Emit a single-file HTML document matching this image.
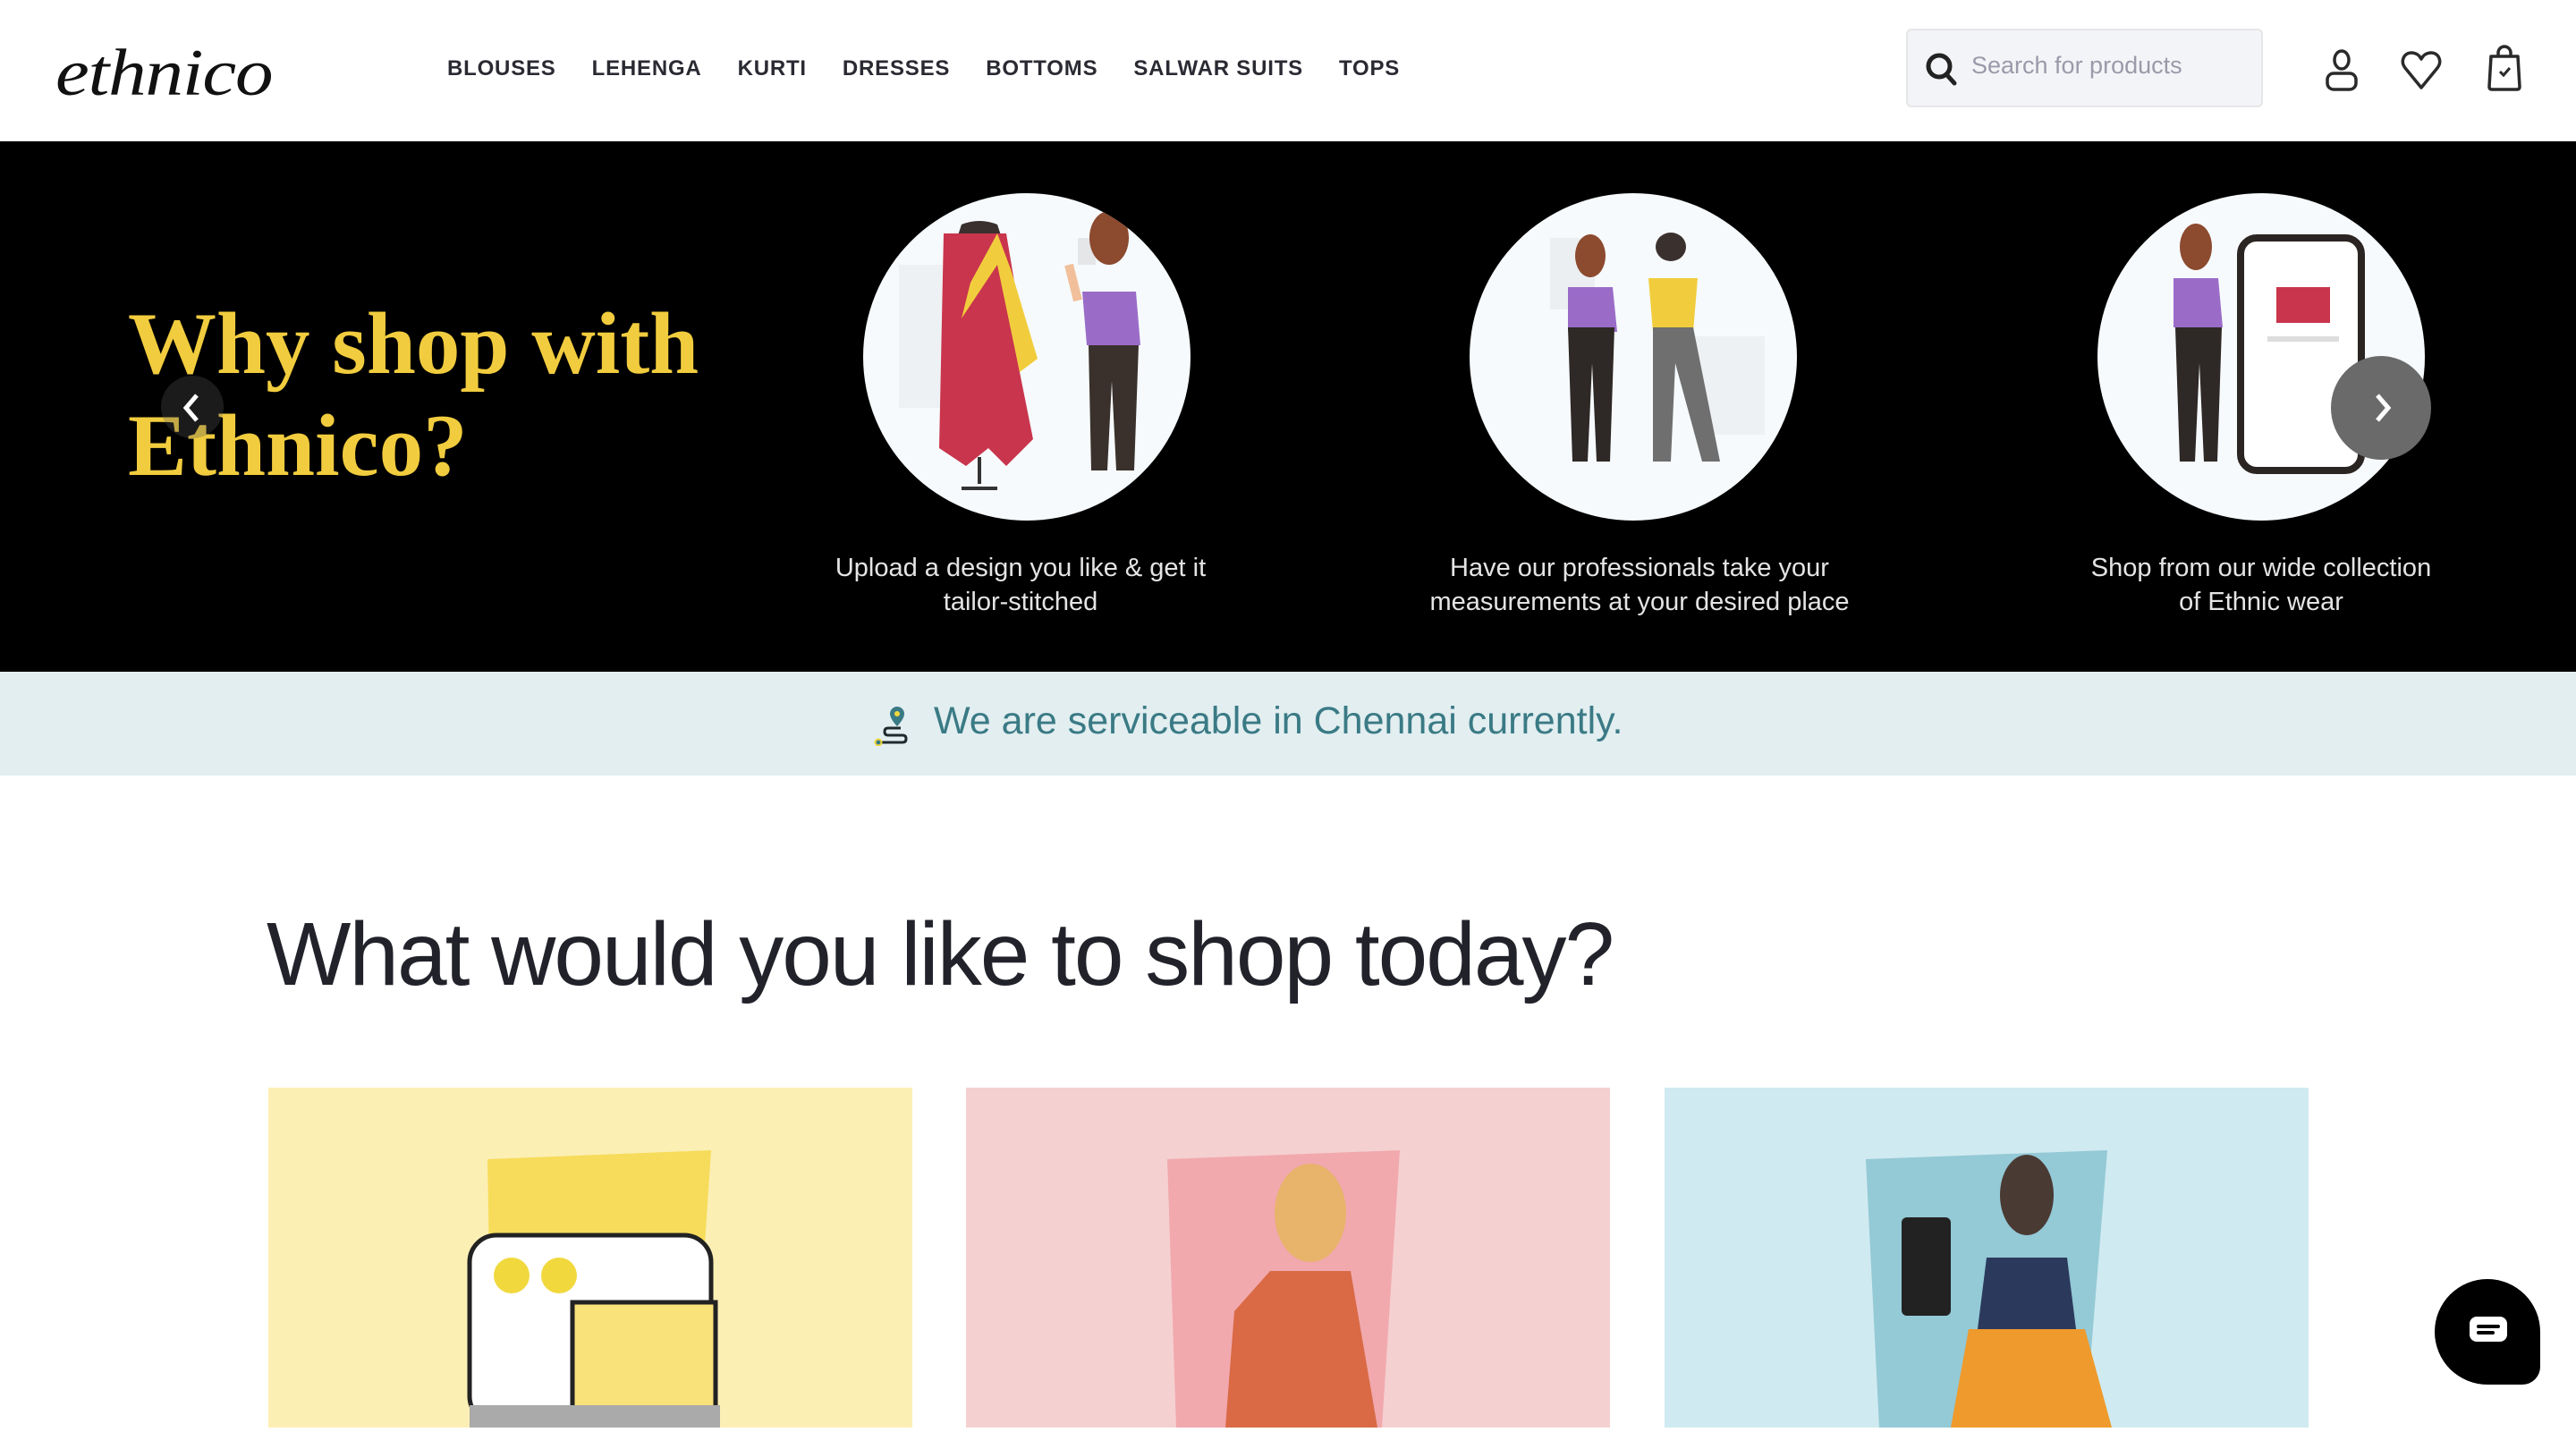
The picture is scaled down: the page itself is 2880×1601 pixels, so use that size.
<!DOCTYPE html>
<html><head><meta charset="utf-8"><style>
*{margin:0;padding:0;box-sizing:border-box}
body{width:2880px;height:1592px;overflow:hidden;background:#fff;font-family:"Liberation Sans",sans-serif;position:relative}
.abs{position:absolute}
.nav{position:absolute;top:63px;left:500px;display:flex;gap:0;font-weight:bold;font-size:24px;letter-spacing:0.8px;color:#2a2a33}
.nav span{margin-right:40px}
.cap{position:absolute;top:616px;width:520px;text-align:center;color:#e4e4e4;font-size:29px;line-height:38px}
.circ{position:absolute;width:366px;height:366px;border-radius:50%;background:#f6fafc;overflow:hidden}
.card{position:absolute;top:1216px;width:720px;height:380px}
</style></head><body>
<!-- header -->
<div class="abs" style="left:62px;top:40px;font-family:'Liberation Serif',serif;font-style:italic;font-size:74px;color:#111;letter-spacing:-1px;transform:scaleX(1.15);transform-origin:left">ethnico</div>
<div class="nav"><span>BLOUSES</span><span>LEHENGA</span><span>KURTI</span><span>DRESSES</span><span>BOTTOMS</span><span>SALWAR SUITS</span><span>TOPS</span></div>
<div class="abs" style="left:2131px;top:32px;width:399px;height:88px;background:#f3f4f7;border:2px solid #e6e6e8;border-radius:6px"></div>
<svg class="abs" style="left:2152px;top:58px" width="38" height="40" viewBox="0 0 38 40"><circle cx="16" cy="16" r="12" fill="none" stroke="#222" stroke-width="5"/><path d="M24 25l9 10" stroke="#222" stroke-width="5" stroke-linecap="round"/></svg>
<div class="abs" style="left:2204px;top:58px;font-size:27px;color:#9a9aaa">Search for products</div>
<svg class="abs" style="left:2596px;top:54px" width="44" height="48" viewBox="0 0 44 48"><ellipse cx="22" cy="13" rx="8" ry="10" fill="none" stroke="#2a2a2a" stroke-width="3.5"/><rect x="6" y="28" width="32" height="18" rx="7" fill="none" stroke="#2a2a2a" stroke-width="3.5"/></svg>
<svg class="abs" style="left:2684px;top:56px" width="46" height="44" viewBox="0 0 46 44"><path d="M23 42L5 20C-1 12 4 3 12 3c5 0 9 3 11 7 2-4 6-7 11-7 8 0 13 9 7 17z" fill="none" stroke="#2a2a2a" stroke-width="3.5" stroke-linejoin="round"/></svg>
<svg class="abs" style="left:2780px;top:50px" width="40" height="52" viewBox="0 0 40 52"><path d="M13 14V9a7 7 0 0114 0v5" fill="none" stroke="#2a2a2a" stroke-width="3.5"/><path d="M5 13h30l2 34q0 3-3 3H6q-3 0-3-3z" fill="none" stroke="#2a2a2a" stroke-width="3.5" stroke-linejoin="round"/><path d="M15 30l4 4 7-8" fill="none" stroke="#2a2a2a" stroke-width="3"/></svg>
<!-- banner -->
<div class="abs" style="left:0;top:158px;width:2880px;height:593px;background:#000"></div>
<div class="abs" style="left:143px;top:328px;font-family:'Liberation Serif',serif;font-weight:bold;font-size:99px;line-height:114px;color:#f1cc3e">Why shop with<br>Ethnico?</div>
<div class="abs" style="left:180px;top:420px;width:70px;height:70px;border-radius:50%;background:rgba(90,90,90,.3)"></div>
<svg class="abs" style="left:200px;top:438px" width="30" height="36"><path d="M20 4L8 18l12 14" fill="none" stroke="#fff" stroke-width="5"/></svg>
<div class="circ" style="left:965px;top:216px">
<svg width="366" height="366" viewBox="0 0 366 366"><rect x="40" y="80" width="110" height="160" fill="#eef1f3"/><rect x="240" y="50" width="20" height="30" fill="#e4e6e8"/>
<path d="M110 35q20-8 40 0l5 15h-50z" fill="#3a302e"/><path d="M90 45h70l10 60-10 20 30 150-30 30-20-20-25 20-30-20z" fill="#c9354d"/><path d="M150 45l15 40 30 100-20 15-25-120-40 60 10-40z" fill="#f1cd3d"/><path d="M130 295v30M110 330h40" stroke="#333" stroke-width="4"/>
<ellipse cx="275" cy="50" rx="22" ry="30" fill="#8c4a2f"/><path d="M245 110h60l5 60h-60z" fill="#9a6cc8"/><path d="M252 170h56l-5 140h-20l-5-100-5 100h-18z" fill="#3a312c"/><path d="M240 120l-10-40" stroke="#f1c09a" stroke-width="10"/></svg></div>
<div class="circ" style="left:1643px;top:216px">
<svg width="366" height="366" viewBox="0 0 366 366"><rect x="250" y="160" width="80" height="110" fill="#eef1f3"/><rect x="90" y="50" width="50" height="80" fill="#eceff1"/>
<ellipse cx="135" cy="70" rx="17" ry="24" fill="#8c4a2f"/><path d="M110 105h50l5 50h-55z" fill="#9a6cc8"/><path d="M110 150h52l-5 150h-15l-5-110-5 110h-17z" fill="#2e2826"/>
<ellipse cx="225" cy="60" rx="17" ry="16" fill="#3a302e"/><path d="M200 95h55l-5 60h-45z" fill="#f1cd3d"/><path d="M205 150h45l30 150h-20l-30-110-5 110h-20z" fill="#6f6f6f"/></svg></div>
<div class="circ" style="left:2345px;top:216px">
<svg width="366" height="366" viewBox="0 0 366 366"><rect x="160" y="50" width="135" height="260" rx="18" fill="#fff" stroke="#2a2422" stroke-width="8"/><path d="M200 105h60v40h-60z" fill="#c9354d"/><rect x="190" y="160" width="80" height="6" fill="#ddd"/>
<ellipse cx="110" cy="60" rx="18" ry="26" fill="#8c4a2f"/><path d="M85 95h50l5 55h-55z" fill="#9a6cc8"/><path d="M87 150h52l-5 150h-15l-5-110-5 110h-17z" fill="#2e2826"/></svg></div>
<div class="abs" style="left:2606px;top:398px;width:112px;height:116px;border-radius:50%;background:#6a6a6a"></div>
<svg class="abs" style="left:2648px;top:438px" width="30" height="36"><path d="M10 4l12 14-12 14" fill="none" stroke="#fff" stroke-width="5"/></svg>
<div class="cap" style="left:881px">Upload a design you like &amp; get it<br>tailor-stitched</div>
<div class="cap" style="left:1573px">Have our professionals take your<br>measurements at your desired place</div>
<div class="cap" style="left:2268px">Shop from our wide collection<br>of Ethnic wear</div>
<!-- service band -->
<div class="abs" style="left:0;top:751px;width:2880px;height:116px;background:#e2eef0"></div>
<svg class="abs" style="left:975px;top:788px" width="52" height="46" viewBox="0 0 52 46"><path d="M28 2a8 8 0 018 8c0 6-8 14-8 14s-8-8-8-14a8 8 0 018-8z" fill="#3a7a85"/><circle cx="28" cy="10" r="3" fill="#f1d83d"/><path d="M32 26h-14q-4 0-4 4t4 4h16q4 0 4 4t-4 4H8" fill="none" stroke="#1e2a2e" stroke-width="3"/><circle cx="7" cy="42" r="3.5" fill="#3a7a85" stroke="#f1d83d" stroke-width="2"/></svg>
<div class="abs" style="left:1044px;top:782px;font-size:43px;color:#3a7a85">We are serviceable in Chennai currently.</div>
<!-- heading -->
<div class="abs" style="left:298px;top:1010px;font-size:100px;color:#22222b;letter-spacing:-2px">What would you like to shop today?</div>
<div class="card" style="left:300px;background:#fcefb4"><svg width="720" height="380"><path d="M245 80l250-10-20 300H250z" fill="#f6dc5a"/><rect x="225" y="165" width="270" height="210" rx="30" fill="#fff" stroke="#222" stroke-width="5"/><circle cx="272" cy="210" r="20" fill="#f1d83d"/><circle cx="325" cy="210" r="20" fill="#f1d83d"/><rect x="340" y="240" width="160" height="140" fill="#f9e27a" stroke="#222" stroke-width="5"/><rect x="225" y="355" width="280" height="25" fill="#aaa"/></svg></div>
<div class="card" style="left:1080px;background:#f5d0d0"><svg width="720" height="380"><path d="M225 80l260-10-20 310H235z" fill="#f1a9ae"/><ellipse cx="385" cy="140" rx="40" ry="55" fill="#e8b36a"/><path d="M300 250l40-45h90l30 175H290z" fill="#d96a45"/></svg></div>
<div class="card" style="left:1861px;background:#cfeaf0"><svg width="720" height="380"><path d="M225 80l270-10-25 310H240z" fill="#94c9d6"/><rect x="265" y="145" width="55" height="110" rx="6" fill="#222"/><ellipse cx="405" cy="120" rx="30" ry="45" fill="#4a3a34"/><path d="M360 190h90l10 80H350z" fill="#2b3a5c"/><path d="M340 270h130l30 110H320z" fill="#ef9a2c"/></svg></div>
<!-- chat -->
<div class="abs" style="left:2722px;top:1430px;width:118px;height:118px;border-radius:50% 50% 20px 50%;background:#000"></div>
<svg class="abs" style="left:2759px;top:1470px" width="46" height="38" viewBox="0 0 46 38"><rect x="2" y="2" width="42" height="28" rx="8" fill="#fff"/><path d="M12 13h22M12 20h16" stroke="#000" stroke-width="4" stroke-linecap="round"/></svg>
</body></html>
